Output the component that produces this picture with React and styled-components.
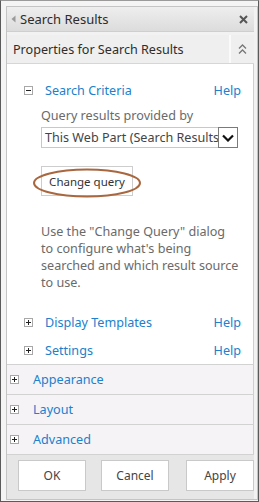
import React from "react";
import styled, { createGlobalStyle } from "styled-components";

const Global = createGlobalStyle`
  html, body { margin: 0; padding: 0; background: #fff; }
  body { font-family: "Noto Sans", "Open Sans", sans-serif; }
  * { box-sizing: border-box; }
`;

const Frame = styled.div`
  width: 259px;
  height: 502px;
  border: 1px solid #5a5a5a;
  border-top-color: #9a9a9a;
  background: #f4f4f4;
  padding: 5px 1px 1px 5px;
  display: flex;
`;

const Panel = styled.div`
  flex: 1;
  border: 1px solid #c4c4c4;
  background: #f2f2f2;
  padding-right: 3px;
  display: flex;
  flex-direction: column;
`;

const TitleBar = styled.div`
  height: 25px;
  display: flex;
  align-items: center;
  padding: 0 6px 0 4px;
  background: linear-gradient(#eeeeee, #dcdcdc);
  border-bottom: 1px solid #cfcfcf;
  color: #2d2d2d;
  font-size: 13px;
`;

const Title = styled.span`
  flex: 1;
  margin-left: 4px;
`;

const PropsBar = styled.div`
  margin-top: 3px;
  height: 29px;
  display: flex;
  background: #efefef;
  border-bottom: 1px solid #d6d6d6;
`;

const PropsTitle = styled.div`
  flex: 1;
  display: flex;
  align-items: center;
  padding-left: 6px;
  font-size: 12.6px;
  color: #2d2d2d;
  border-right: 2px solid #fafafa;
`;

const Collapse = styled.div`
  width: 23px;
  display: flex;
  align-items: center;
  justify-content: center;
`;

const Body = styled.div`
  background: #fff;
  border-right: 1px solid #cfcfcf;
  padding: 16px 12px 0 17px;
  height: 300px;
  display: flex;
  flex-direction: column;
`;

const SectionRow = styled.div`
  display: flex;
  align-items: center;
  height: 20px;
  margin-top: ${(p) => p.$mt || 0}px;
`;

const BoxIcon = styled.span`
  width: 9px;
  height: 9px;
  border: 1px solid #a8a8a8;
  background: #fff;
  position: relative;
  flex: none;
  &::before {
    content: "";
    position: absolute;
    left: 1px;
    top: 3px;
    width: 5px;
    height: 1px;
    background: #222;
  }
  &::after {
    content: "";
    display: ${(p) => (p.$plus ? "block" : "none")};
    position: absolute;
    left: 3px;
    top: 1px;
    width: 1px;
    height: 5px;
    background: #222;
  }
`;

const Link = styled.span`
  color: #2080cc;
  font-size: 12.6px;
  margin-left: ${(p) => p.$ml || 12}px;
  flex: ${(p) => (p.$grow ? 1 : "none")};
`;

const Indented = styled.div`
  padding-left: 17px;
  display: flex;
  flex-direction: column;
  align-items: flex-start;
`;

const Label = styled.div`
  color: #6a6a6a;
  font-size: 12.6px;
  line-height: 20px;
  margin-top: 6px;
`;

const Select = styled.div`
  margin-top: 1px;
  width: 197px;
  height: 21px;
  display: flex;
  border: 1px solid #c8c8c8;
  background: #fff;
`;

const SelectText = styled.div`
  flex: 1;
  overflow: hidden;
  white-space: nowrap;
  font-size: 12.6px;
  line-height: 19px;
  color: #444;
  padding-left: 3px;
`;

const SelectArrow = styled.div`
  width: 20px;
  margin: -1px -1px -1px 0;
  border: 1px solid #7a7a7a;
  background: #fff;
  display: flex;
  align-items: center;
  justify-content: center;
`;

const ButtonWrap = styled.div`
  position: relative;
  margin-top: 18px;
`;

const QueryButton = styled.div`
  width: 92px;
  height: 30px;
  border: 1px solid #cdcdcd;
  background: #fff;
  display: flex;
  align-items: center;
  justify-content: center;
  font-size: 11.5px;
  color: #333;
`;

const Ring = styled.svg`
  position: absolute;
  left: -9px;
  top: 2px;
  pointer-events: none;
`;

const Para = styled.p`
  margin: 27px 0 0;
  color: #6a6a6a;
  font-size: 12.6px;
  line-height: 17px;
  white-space: nowrap;
`;

const Group = styled.div`
  height: 30px;
  display: flex;
  align-items: center;
  padding-left: 3px;
  background: #f5f3f5;
  border-top: 1px solid #d2d2d2;
  border-right: 1px solid #cfcfcf;
`;

const Footer = styled.div`
  flex: 1;
  background: #e6e6e6;
  border-top: 1px solid #d2d2d2;
  display: flex;
  align-items: flex-start;
  gap: 15px;
  padding: 5px 0 0 11px;
`;

const FooterButton = styled.div`
  width: 68px;
  height: 31px;
  background: #fff;
  border: 1px solid #c9c9c9;
  display: flex;
  align-items: center;
  justify-content: center;
  font-size: 12px;
  color: #444;
  margin-left: ${(p) => p.$ml || 0}px;
`;

const Triangle = () => (
  <svg width="5" height="8" viewBox="0 0 5 8">
    <path d="M4.5 0.5 L0.5 4 L4.5 7.5 Z" fill="#9a9a9a" />
  </svg>
);

const CloseIcon = () => (
  <svg width="9" height="9" viewBox="0 0 9 9">
    <path d="M1 1 L8 8 M8 1 L1 8" stroke="#555" strokeWidth="2" />
  </svg>
);

const DoubleChevron = () => (
  <svg width="9" height="12" viewBox="0 0 9 12">
    <path d="M1 5.5 L4.5 2 L8 5.5" fill="none" stroke="#777" strokeWidth="1.3" />
    <path d="M1 10.5 L4.5 7 L8 10.5" fill="none" stroke="#777" strokeWidth="1.3" />
  </svg>
);

const Chevron = () => (
  <svg width="12" height="8" viewBox="0 0 12 8">
    <path d="M1 1.5 L6 6.5 L11 1.5" fill="none" stroke="#111" strokeWidth="2.2" />
  </svg>
);

export default function App() {
  return (
    <>
      <Global />
      <Frame>
        <Panel>
          <TitleBar>
            <Triangle />
            <Title>Search Results</Title>
            <CloseIcon />
          </TitleBar>
          <PropsBar>
            <PropsTitle>Properties for Search Results</PropsTitle>
            <Collapse>
              <DoubleChevron />
            </Collapse>
          </PropsBar>
          <Body>
            <SectionRow>
              <BoxIcon />
              <Link $grow>Search Criteria</Link>
              <Link>Help</Link>
            </SectionRow>
            <Indented>
              <Label>Query results provided by</Label>
              <Select>
                <SelectText>This Web Part (Search Results)</SelectText>
                <SelectArrow>
                  <Chevron />
                </SelectArrow>
              </Select>
              <ButtonWrap>
                <QueryButton>Change query</QueryButton>
                <Ring width="110" height="30" viewBox="0 0 110 30">
                  <ellipse cx="55" cy="15" rx="53" ry="13.5" fill="none" stroke="#a8673f" strokeWidth="2" />
                </Ring>
              </ButtonWrap>
              <Para>
                Use the "Change Query" dialog
                <br />
                to configure what's being
                <br />
                searched and which result source
                <br />
                to use.
              </Para>
            </Indented>
            <SectionRow $mt={21}>
              <BoxIcon $plus />
              <Link $grow>Display Templates</Link>
              <Link>Help</Link>
            </SectionRow>
            <SectionRow $mt={8}>
              <BoxIcon $plus />
              <Link $grow>Settings</Link>
              <Link>Help</Link>
            </SectionRow>
          </Body>
          <Group>
            <BoxIcon $plus />
            <Link $ml={14}>Appearance</Link>
          </Group>
          <Group>
            <BoxIcon $plus />
            <Link $ml={14}>Layout</Link>
          </Group>
          <Group>
            <BoxIcon $plus />
            <Link $ml={14}>Advanced</Link>
          </Group>
          <Footer>
            <FooterButton>OK</FooterButton>
            <FooterButton>Cancel</FooterButton>
            <FooterButton $ml={2}>Apply</FooterButton>
          </Footer>
        </Panel>
      </Frame>
    </>
  );
}
